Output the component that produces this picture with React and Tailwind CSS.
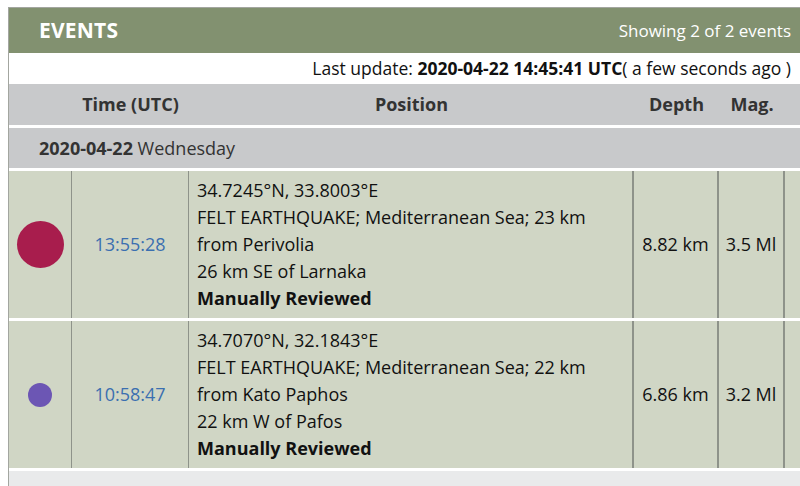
const events = [
  {
    dot: 'w-[47px] h-[47px] bg-[#a81d4d]',
    time: '13:55:28',
    coords: '34.7245°N, 33.8003°E',
    desc: 'FELT EARTHQUAKE; Mediterranean Sea; 23 km from Perivolia',
    near: '26 km SE of Larnaka',
    depth: '8.82 km',
    mag: '3.5 Ml',
  },
  {
    dot: 'w-[24px] h-[24px] bg-[#6c56b4]',
    time: '10:58:47',
    coords: '34.7070°N, 32.1843°E',
    desc: 'FELT EARTHQUAKE; Mediterranean Sea; 22 km from Kato Paphos',
    near: '22 km W of Pafos',
    depth: '6.86 km',
    mag: '3.2 Ml',
  },
]

function EventRow({ ev }) {
  return (
    <div className="flex h-[147px] bg-[#d0d6c5] text-[#111] mb-[3px]">
      <div className="w-[63px] shrink-0 flex items-center justify-center border-r border-[#8e938a]">
        <div className={`${ev.dot} rounded-full`} />
      </div>
      <div className="w-[117px] shrink-0 flex items-center justify-center border-r border-[#8e938a] text-[#3b6fb0]">
        {ev.time}
      </div>
      <div className="w-[445px] shrink-0 border-r-2 border-[#8e938a] pl-[8px] pr-[24px] pt-[6px] leading-[27px]">
        <div>{ev.coords}</div>
        <div>{ev.desc}</div>
        <div>{ev.near}</div>
        <div className="font-bold">Manually Reviewed</div>
      </div>
      <div className="w-[85px] shrink-0 flex items-center justify-center border-r-2 border-[#8e938a]">
        {ev.depth}
      </div>
      <div className="w-[66px] shrink-0 flex items-center justify-center border-r-2 border-[#8e938a]">
        {ev.mag}
      </div>
      <div className="flex-1" />
    </div>
  )
}

export default function App() {
  return (
    <div className="w-[800px] h-[486px] overflow-hidden bg-white pl-[8px] pt-[7px] text-[18px]" style={{ fontFamily: '"Open Sans", sans-serif' }}>
      <div className="h-full border-l border-t border-[#a3a6a0] flex flex-col">
        {/* title bar */}
        <div className="h-[45px] shrink-0 bg-[#829170] flex items-center justify-between pl-[30px] pr-[9px] text-white">
          <span className="text-[21px] font-bold tracking-[0.2px]">EVENTS</span>
          <span className="text-[17px]">Showing 2 of 2 events</span>
        </div>

        <div className="h-[31px] shrink-0 flex items-center justify-end pr-[9px] text-[17.5px] text-[#111]">
          Last update:&nbsp;<b>2020-04-22 14:45:41 UTC</b>( a few seconds ago )
        </div>

        {/* column headings */}
        <div className="h-[41px] shrink-0 flex bg-[#c8c9cb] font-bold text-[#333] mb-[3px]">
          <div className="w-[63px] shrink-0" />
          <div className="w-[117px] shrink-0 flex items-center justify-center">Time (UTC)</div>
          <div className="w-[445px] shrink-0 flex items-center justify-center">Position</div>
          <div className="w-[85px] shrink-0 flex items-center justify-center">Depth</div>
          <div className="w-[66px] shrink-0 flex items-center justify-center">Mag.</div>
        </div>

        <div className="h-[40px] shrink-0 flex items-center bg-[#c8c9cb] pl-[30px] text-[#333] mb-[3px]">
          <b>2020-04-22</b>&nbsp;Wednesday
        </div>

        {events.map((ev) => (
          <EventRow key={ev.time} ev={ev} />
        ))}

        <div className="flex-1 bg-[#e9eaeb]" />
      </div>
    </div>
  )
}
